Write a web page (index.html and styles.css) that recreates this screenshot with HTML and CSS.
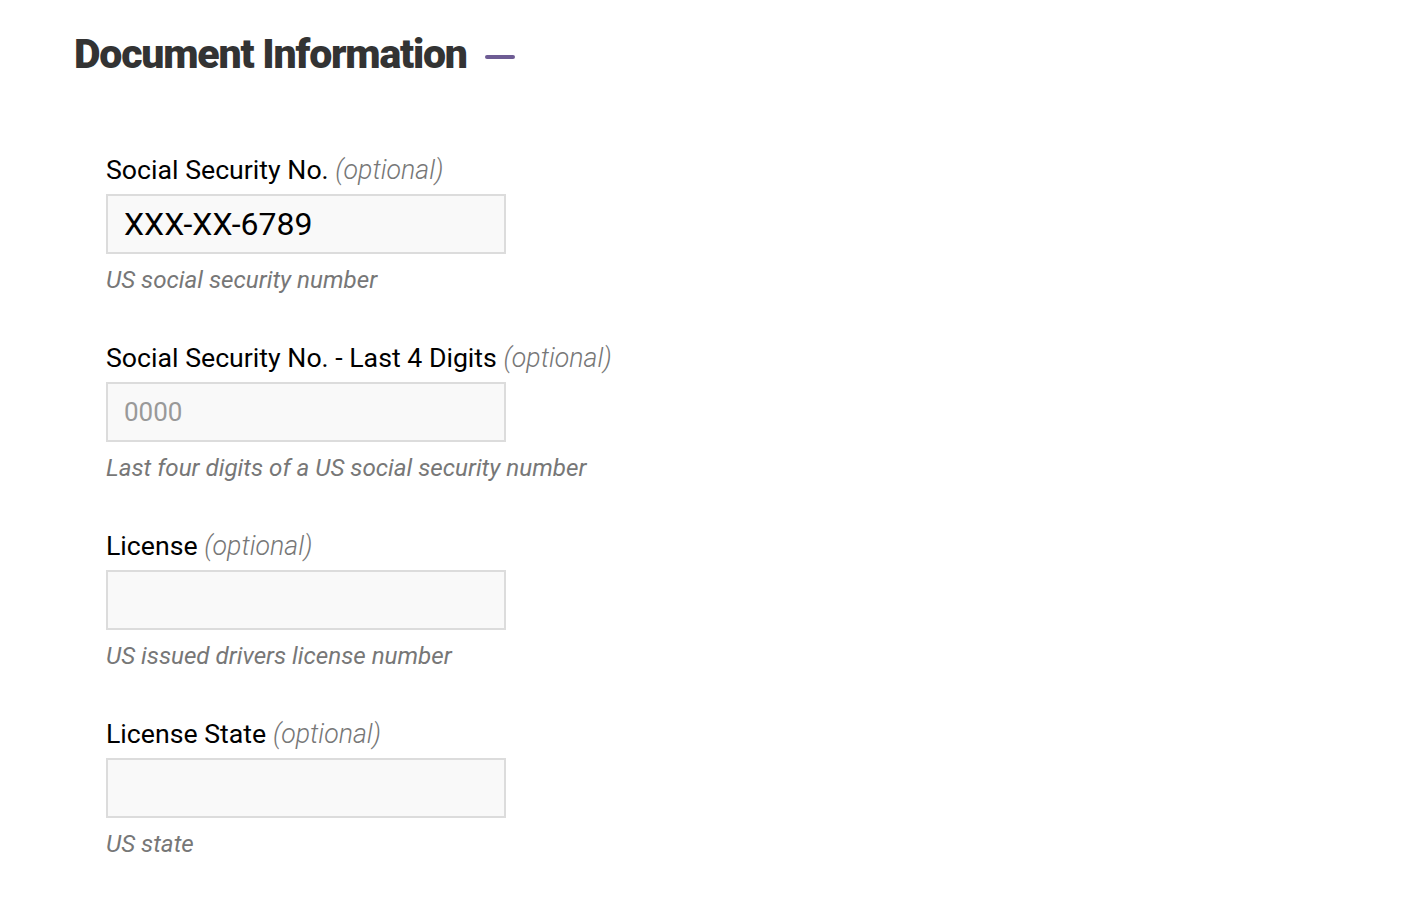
FILE: index.html
```html
<!DOCTYPE html>
<html lang="en">
<head>
    <meta charset="UTF-8">
    <title>Document Information</title>
    <link rel="stylesheet" href="styles.css">
</head>
<body>

<div class="section">
    <!-- section header -->
    <div class="section-head">
        <h2>Document Information</h2>
        <span class="collapse-bar"></span>
    </div>

    <div class="fields">
        <div class="field">
            <label>Social Security No. <em>(optional)</em></label>
            <input type="text" class="big" value="XXX-XX-6789">
            <div class="hint">US social security number</div>
        </div>

        <div class="field">
            <label>Social Security No. - Last 4 Digits <em>(optional)</em></label>
            <input type="text" placeholder="0000">
            <div class="hint">Last four digits of a US social security number</div>
        </div>

        <div class="field">
            <label>License <em>(optional)</em></label>
            <input type="text">
            <div class="hint">US issued drivers license number</div>
        </div>

        <div class="field">
            <label>License State <em>(optional)</em></label>
            <input type="text">
            <div class="hint">US state</div>
        </div>
    </div>
</div>

</body>
</html>
```

FILE: styles.css
```css
body {
    margin: 0;
    padding: 0;
    font-family: Roboto, "Liberation Sans", sans-serif;
    background-color: #ffffff;
    color: #000;
}

.section {
    padding: 30px 74px;
}

.section-head {
    display: flex;
    align-items: center;
    gap: 18px;
}

.section-head h2 {
    margin: 0;
    font-size: 41px;
    font-weight: 900;
    letter-spacing: -1.2px;
    color: #333;
}

.collapse-bar {
    width: 30px;
    height: 4px;
    border-radius: 2px;
    background-color: #6e5c94;
    margin-top: 6px;
}

.fields {
    padding: 76px 32px 0;
}

.field {
    margin-bottom: 48px;
}

.field label {
    display: block;
    font-size: 26.7px;
    margin-bottom: 8px;
}

.field label em {
    color: #777;
    font-weight: 300;
}

.field input {
    display: block;
    box-sizing: border-box;
    width: 400px;
    height: 60px;
    padding: 0 16px;
    border: 2px solid #dcdcdc;
    background-color: #f9f9f9;
    font-family: Roboto, "Liberation Sans", sans-serif;
    font-size: 26px;
    color: #000;
    outline: none;
}

.field input.big {
    font-size: 32px;
}

.field input::placeholder {
    color: #999;
}

.hint {
    margin-top: 12px;
    font-size: 24.2px;
    font-style: italic;
    color: #777;
}
```
